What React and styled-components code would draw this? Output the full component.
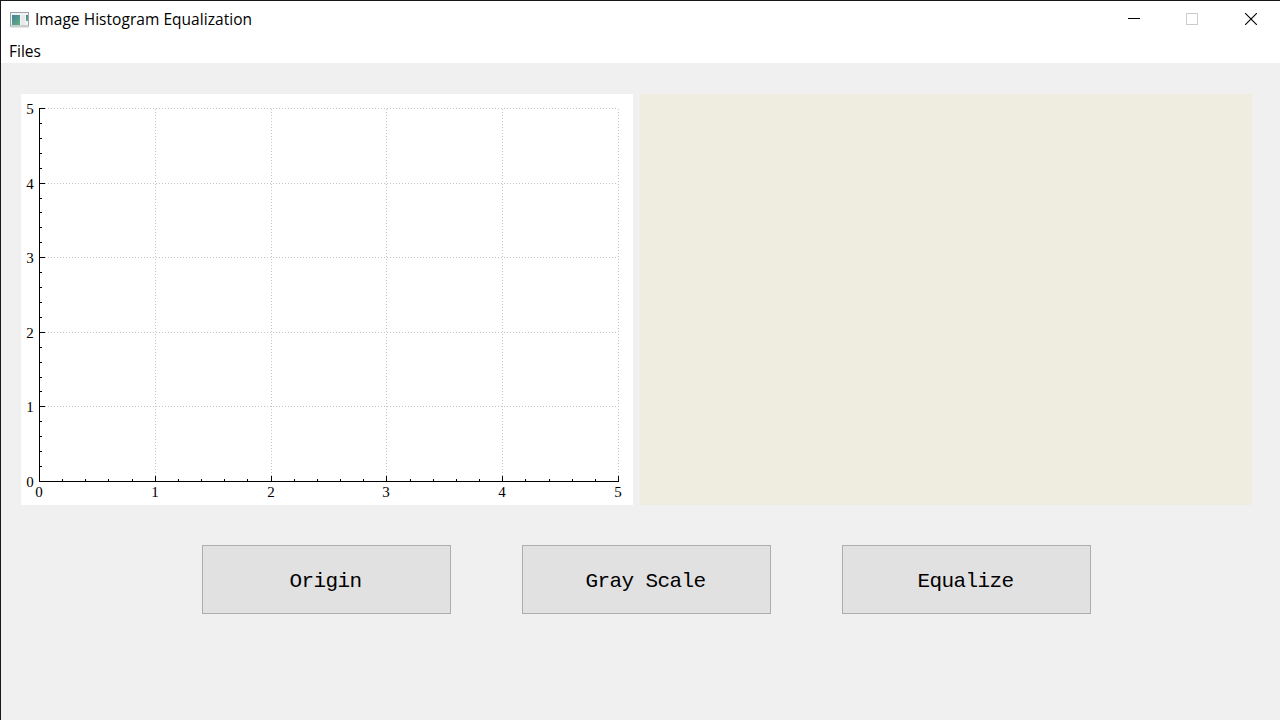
import React from "react";
import styled, { createGlobalStyle } from "styled-components";

const GlobalStyle = createGlobalStyle`
  *, *::before, *::after { box-sizing: border-box; }
  html, body { margin: 0; overflow: hidden; background: #f0f0f0; }
`;

const Window = styled.div`
  display: flex;
  flex-direction: column;
  width: 1280px;
  height: 720px;
  border-top: 1px solid #18161a;
  border-left: 1px solid #18161a;
  background: #f0f0f0;
  color: #000;
  font-family: "Open Sans", "Noto Sans", sans-serif;
  font-size: 15.5px;
`;

const TitleBar = styled.header`
  display: flex;
  align-items: center;
  height: 37px;
  padding-left: 9px;
  background: #fff;
`;

const Title = styled.span`
  margin-left: 5px;
  flex: 1;
  line-height: 37px;
  white-space: nowrap;
  letter-spacing: 0.04px;
`;

const Controls = styled.div`
  display: flex;
  align-self: flex-start;
`;

const ControlButton = styled.button`
  display: flex;
  align-items: center;
  justify-content: center;
  width: ${(p) => (p.$last ? 59 : 58)}px;
  height: 36px;
  padding: 0 0 0 ${(p) => (p.$last ? 1 : 0)}px;
  border: 0;
  background: transparent;
  color: ${(p) => (p.$muted ? "#ccc" : "#000")};
`;

const MenuBar = styled.nav`
  display: flex;
  height: 25px;
  padding-left: 8px;
  background: #fff;
`;

const MenuItem = styled.span`
  line-height: 26px;
`;

const Panels = styled.main`
  display: flex;
  gap: 7px;
  padding: 31px 0 0 20px;
`;

const Panel = styled.section`
  width: 612px;
  height: 411px;
  background: ${(p) => p.$color};
`;

const Chart = styled.svg`
  display: block;
`;

const TickLabel = styled.text`
  font-family: "Liberation Serif", serif;
  font-size: 15px;
  text-anchor: middle;
`;

const Actions = styled.footer`
  display: flex;
  gap: 71px;
  padding: 40px 0 0 201px;
`;

const ActionButton = styled.button`
  width: 249px;
  height: 69px;
  padding: 4px 2px 0 0;
  border: 1px solid #adadad;
  background: #e1e1e1;
  color: #000;
  font-family: "Liberation Mono", monospace;
  font-size: 21px;
  letter-spacing: -0.6px;
`;

function AppIcon() {
  return (
    <svg width="20" height="16" viewBox="0 0 20 16">
      <defs>
        <linearGradient id="screen" x1="0" y1="0" x2="0.7" y2="1">
          <stop offset="0" stopColor="#477f9d" />
          <stop offset="1" stopColor="#5eab82" />
        </linearGradient>
      </defs>
      <rect x="0.5" y="0.5" width="18" height="13.5" fill="#f3f4f5" stroke="#9ca2a7" />
      <path d="M0 15H19" stroke="#c9cccf" />
      <rect x="2" y="3" width="8" height="10" fill="url(#screen)" />
      <rect x="11" y="3" width="4" height="10" fill="#e7e9ea" />
      <rect x="16" y="3" width="2" height="6" fill="url(#screen)" />
    </svg>
  );
}

const ticks = [0, 1, 2, 3, 4, 5];
const minors = Array.from({ length: 26 }, (_, i) => i).filter((i) => i % 5);
const px = (v) => Math.round(18 + v * 115.8);
const py = (v) => Math.round(387 - v * 74.6);

function Plot() {
  return (
    <Chart width="612" height="411" viewBox="0 0 612 411">
      <g stroke="#c3c3c3" strokeDasharray="1 2" shapeRendering="crispEdges">
        {ticks.slice(1).map((v) => (
          <React.Fragment key={v}>
            <line x1="18" x2="597" y1={py(v) + 0.5} y2={py(v) + 0.5} />
            <line x1={px(v) + 0.5} x2={px(v) + 0.5} y1="15" y2="387" />
          </React.Fragment>
        ))}
      </g>
      <g stroke="#000" shapeRendering="crispEdges">
        <path d="M18.5 14V388M18 387.5H598" fill="none" />
        {ticks.map((v) => (
          <path key={v} d={`M18 ${py(v) + 0.5}h6M${px(v) + 0.5} 388v-6`} />
        ))}
        {minors.map((i) => (
          <path key={i} d={`M18 ${py(i / 5) + 0.5}h3M${px(i / 5) + 0.5} 388v-3`} />
        ))}
      </g>
      {ticks.map((v) => (
        <React.Fragment key={v}>
          <TickLabel x="9" y={py(v) + 6}>{v}</TickLabel>
          <TickLabel x={px(v)} y="403">{v}</TickLabel>
        </React.Fragment>
      ))}
    </Chart>
  );
}

export default function App() {
  return (
    <>
      <GlobalStyle />
      <Window>
        <TitleBar>
          <AppIcon />
          <Title>Image Histogram Equalization</Title>
          <Controls>
            <ControlButton aria-label="Minimize">
              <svg width="12" height="12"><path d="M0 5.5H12" stroke="currentColor" /></svg>
            </ControlButton>
            <ControlButton $muted aria-label="Maximize">
              <svg width="12" height="12"><rect x=".5" y=".5" width="11" height="11" fill="none" stroke="currentColor" /></svg>
            </ControlButton>
            <ControlButton $last aria-label="Close">
              <svg width="12" height="12"><path d="M0 0L12 12M12 0L0 12" stroke="currentColor" strokeWidth="1.1" /></svg>
            </ControlButton>
          </Controls>
        </TitleBar>
        <MenuBar><MenuItem>Files</MenuItem></MenuBar>
        <Panels>
          <Panel $color="#fff"><Plot /></Panel>
          <Panel $color="#efede0" />
        </Panels>
        <Actions>
          <ActionButton>Origin</ActionButton>
          <ActionButton>Gray Scale</ActionButton>
          <ActionButton>Equalize</ActionButton>
        </Actions>
      </Window>
    </>
  );
}
